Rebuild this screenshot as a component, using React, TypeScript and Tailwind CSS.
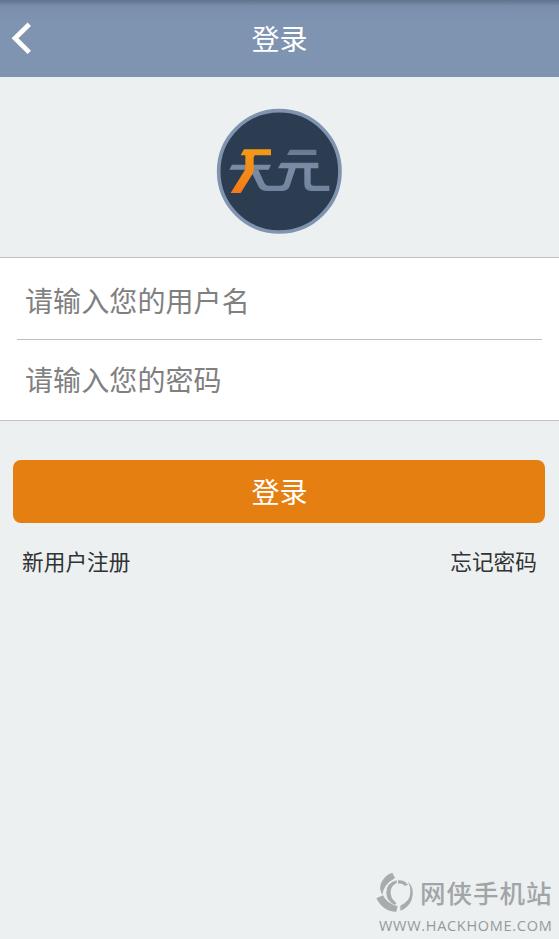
import React from "react";

const cjk = "font-['Noto_Sans_CJK_SC',sans-serif]";

function Header() {
  return (
    <header className="relative flex h-[77px] shrink-0 items-center justify-center bg-linear-to-b from-[#5f738c] via-[#7a8fab] via-[8%] to-[#7f94b0] to-[30%]">
      <button aria-label="返回" className="absolute left-[11px] top-[21px]">
        <svg width="22" height="34" viewBox="0 0 22 34" fill="none" stroke="white" strokeWidth="4.8">
          <path d="M18.3 3.2 4 17.3l14.3 14.1" />
        </svg>
      </button>
      <h1 className="pb-[2px] text-[28px] leading-[40px] text-white">登录</h1>
    </header>
  );
}

function Logo() {
  return (
    <svg width="142" height="142" viewBox="0 0 426 426">
      <defs>
        <linearGradient id="steel" x1="0" y1="145" x2="0" y2="275" gradientUnits="userSpaceOnUse">
          <stop offset="0" stopColor="#66788f" />
          <stop offset="0.45" stopColor="#7b8da6" />
          <stop offset="1" stopColor="#71849d" />
        </linearGradient>
        <linearGradient id="flame" x1="0" y1="148" x2="0" y2="279" gradientUnits="userSpaceOnUse">
          <stop offset="0" stopColor="#f39a16" />
          <stop offset="1" stopColor="#f67919" />
        </linearGradient>
      </defs>
      <circle cx="211" cy="214" r="182" fill="#2c3c51" stroke="#8094b0" strokeWidth="11" />
      <g fill="url(#steel)">
        <path d="M69 194H186L179 209H61Z" />
        <path d="M243 149H322V165H234Z" />
        <path d="M216 188H328V205H305V248Q305 257 314 257H361V273H307Q286 273 286 252V205H260L243 256Q238 273 221 273H174Q157 273 149 260L129 220V209H148L166 249Q170 257 178 257H215Q223 257 226 249L239 205H207Z" />
      </g>
      <path fill="url(#flame)" d="M105 148H186V166H137L134 173V209L132 220L95 279H65L109 208V166H95Z" />
    </svg>
  );
}

function Watermark() {
  return (
    <div className="mt-auto h-[71px] shrink-0 pl-[372px] text-[#a1a5a8]">
      <div className="flex h-[48px] items-center">
        <svg width="46" height="50" viewBox="0 0 138 150" className="shrink-0" fill="#a8acae">
          <path d="M61 17 69 33Q34 53 31 84Q18 62 30 43Q40 23 61 17Z" />
          <path d="M13 94 33 85Q46 112 77 117L73 134Q34 135 13 94Z" />
          <path d="M74 40Q43 48 43 77Q43 102 69 114L73 108Q54 93 56 73Q58 55 74 48Z" />
          <path d="M78 40Q96 38 108 53L99 57Q90 48 78 50Z" />
          <path d="M108 44Q130 63 119 98Q111 121 85 131V116Q114 104 115 76Q116 58 108 44Z" />
        </svg>
        <span className="ml-[2px] whitespace-nowrap text-[25.5px] font-medium leading-[38px] tracking-[1px]">网侠手机站</span>
      </div>
      <div className="ml-[7px] whitespace-nowrap font-['Open_Sans',sans-serif] text-[14.5px] font-medium leading-[20px] tracking-[0.7px] text-[#96999c]">WWW.HACKHOME.COM</div>
    </div>
  );
}

export default function App() {
  return (
    <main className={`flex h-[939px] w-[559px] flex-col overflow-hidden bg-[#ecf0f1] ${cjk}`}>
      <Header />
      <div className="flex h-[180px] shrink-0 justify-center pt-[23px] pl-px">
        <Logo />
      </div>
      <section className="shrink-0 border-y border-[#c0c2c3] bg-white px-[17px]">
        <div className="flex h-[82px] items-center border-b border-[#bebebe] pl-[8px]">
          <input aria-label="用户名" placeholder="请输入您的用户名" className="h-[42px] w-full bg-transparent pt-[3px] text-[28px] leading-[40px] tracking-[0.1px] outline-none placeholder:text-[#808080]" />
        </div>
        <div className="flex h-[80px] items-center pb-[2px] pl-[8px]">
          <input type="text" aria-label="密码" placeholder="请输入您的密码" className="h-[42px] w-full bg-transparent text-[28px] leading-[40px] tracking-[0.1px] outline-none placeholder:text-[#808080]" />
        </div>
      </section>
      <button className="ml-[13px] mr-[14px] mt-[39px] flex h-[63px] shrink-0 items-center justify-center rounded-[8px] bg-[#e67f12] pb-px pl-px text-[28px] text-white">登录</button>
      <div className="mt-[22px] flex shrink-0 justify-between px-[22px] text-[21.7px] leading-[32px] text-[#303233]">
        <a>新用户注册</a>
        <a>忘记密码</a>
      </div>
      <Watermark />
    </main>
  );
}
